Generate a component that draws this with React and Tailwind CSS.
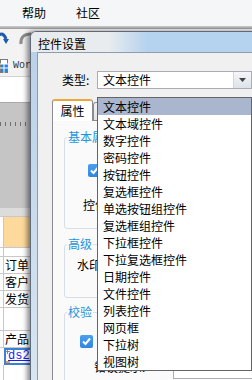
import React from 'react';

const controlTypes = [
  '文本控件',
  '文本域控件',
  '数字控件',
  '密码控件',
  '按钮控件',
  '复选框控件',
  '单选按钮组控件',
  '复选框组控件',
  '下拉框控件',
  '下拉复选框控件',
  '日期控件',
  '文件控件',
  '列表控件',
  '网页框',
  '下拉树',
  '视图树',
];

function CheckBox() {
  return (
    <div className="w-[13px] h-[13px] rounded-[2px] bg-gradient-to-b from-[#4a9ff0] to-[#2f86dc] flex items-center justify-center">
      <svg width="11" height="11" viewBox="0 0 11 11">
        <path d="M2 5.5 L4.5 8 L9 2.5" stroke="#ffffff" strokeWidth="2" fill="none" />
      </svg>
    </div>
  );
}

function GridRow({ h, children, cellClass = '' }) {
  return (
    <div className={`flex border-b border-[#c8c8c8] ${h}`}>
      <div className="w-[4px] bg-white border-r border-[#c8c8c8]" />
      <div className={`flex-1 pl-[1px] leading-[16px] ${cellClass}`}>{children}</div>
    </div>
  );
}

export default function App() {
  return (
    <div className="relative w-[252px] h-[380px] overflow-hidden bg-white font-['Noto_Sans_CJK_SC',sans-serif] text-[12px] text-black">
      {/* 设计器主窗口（背景） */}
      <div className="flex flex-col w-full h-full">
        <div className="h-[26px] flex items-center bg-[#f5f6f7] leading-none">
          <span className="ml-[22px]">帮助</span>
          <span className="ml-[30px]">社区</span>
        </div>
        <div className="h-[3px] bg-gradient-to-b from-[#d0d0d0] to-[#989898]" />
        <div className="h-[47px] bg-[#f3f3f3] flex flex-col">
          <div className="h-[24px] flex items-start pt-[3px]">
            <svg width="9" height="13" viewBox="0 0 9 13">
              <path d="M-2 4 Q3 -1 6 7" stroke="#1d5ca8" strokeWidth="3" fill="none" />
              <path d="M3 7 L9 7 L6 12 Z" fill="#1d5ca8" />
            </svg>
            <svg className="ml-[9px]" width="13" height="13" viewBox="0 0 13 13">
              <path d="M3 12 Q2 2 13 2" stroke="#8c8c8c" strokeWidth="3" fill="none" />
            </svg>
          </div>
          <div className="h-[23px] flex items-center pt-[2px]">
            <svg width="8" height="14" viewBox="0 0 8 14">
              <rect x="0.5" y="0.5" width="7" height="13" fill="#ffffff" stroke="#7a7a7a" />
              <rect x="1" y="5" width="6" height="8" fill="#2a84dc" />
              <path d="M0 5 H8 M0 9 H8 M4 5 V14" stroke="#ffffff" strokeWidth="1" />
            </svg>
            <span className="ml-[5px] font-['Liberation_Mono',monospace] text-[10px] text-[#333333]">Word</span>
          </div>
        </div>
        <div className="h-[26px] bg-white border-t border-[#d4d4d4]" />
        <div className="h-[106px] bg-[#c5c5c5] border-t border-[#a9a9a9] pt-[19px]">
          <div className="flex gap-[4px]">
            {[0, 1, 2, 3, 4, 5, 6].map((i) => (
              <div key={i} className="w-[1px] h-[4px] bg-[#6f6f6f]" />
            ))}
          </div>
        </div>
        <div className="h-[9px] bg-[#dcdcdc] border-b border-[#c8c8c8]" />
        <div className="flex-1 flex flex-col">
          <GridRow h="h-[31px]" cellClass="bg-[#fdd99b]" />
          <GridRow h="h-[9px]" />
          <GridRow h="h-[17px]">订单</GridRow>
          <GridRow h="h-[17px]">客户</GridRow>
          <GridRow h="h-[17px]">发货</GridRow>
          <GridRow h="h-[23px]" />
          <GridRow h="h-[17px]">产品</GridRow>
          <div className="flex h-[17px]">
            <div className="w-[4px] bg-white" />
            <div className="relative flex-1 border-2 border-[#3b7fd8] pl-[2px] leading-[13px] font-['Liberation_Mono',monospace] text-[12px] text-[#1a1aff] underline">
              ds2.
              <svg className="absolute left-0 top-0" width="4" height="4" viewBox="0 0 4 4">
                <path d="M0 1.5 H4 M1.5 0 V4" stroke="#888888" strokeWidth="1" />
              </svg>
              <span className="absolute left-0 bottom-0 w-[4px] h-[2px] bg-[#f0a020]" />
            </div>
          </div>
          <div className="flex flex-1">
            <div className="w-[4px] bg-white border-r border-[#c8c8c8]" />
          </div>
        </div>
      </div>

      {/* 控件设置 对话框 */}
      <div className="absolute left-[30px] top-[31px] w-[260px] h-[360px] rounded-tl-[6px] border-l border-t border-[#5f6b78] bg-gradient-to-b from-[#b8d0e8] to-[#d9e6f2] shadow-[-3px_0_5px_rgba(0,0,0,0.45)] flex flex-col">
        <div className="h-[28px] pl-[7px] pt-[4px] leading-[16px] rounded-tl-[5px] bg-linear-to-r from-[#e9ecef] from-30% to-[#b5d2ee] to-45%">
          控件设置
        </div>
        <div className="flex-1 ml-[6px] border-l border-t border-[#8d9cab] bg-[#f0f0f0] flex flex-col">
          <div className="mt-[18px] flex h-[18px]">
            <div className="w-[59px] pl-[24px] leading-[18px]">类型:</div>
            <div className="w-[155px] h-[18px] border border-[#abadb3] bg-white flex">
              <div className="flex-1 pl-[5px] leading-[16px]">文本控件</div>
              <div className="w-[18px] border-l border-[#d5d5d5] bg-gradient-to-b from-[#f4f6f8] to-[#dde3ea] flex items-center justify-center">
                <svg width="7" height="4" viewBox="0 0 7 4">
                  <path d="M0 0 H7 L3.5 4 Z" fill="#444444" />
                </svg>
              </div>
            </div>
          </div>

          <div className="mt-[10px] ml-[14px] flex items-end h-[21px]">
            <div className="relative z-10 -mb-[1px] w-[41px] h-[22px] border-x border-t-2 border-[#898c95] border-t-[#eda83a] rounded-t-[3px] bg-white flex items-center justify-center leading-[16px]">
              属性
            </div>
            <div className="w-[60px] h-[18px] border-x border-t border-[#898c95] rounded-t-[3px] bg-gradient-to-b from-[#f3f3f3] to-[#e3e3e3]" />
          </div>

          <div className="flex-1 ml-[14px] border-l border-t border-[#898c95] bg-[#fafafa] flex flex-col">
            <fieldset className="mt-[8px] ml-[11px] w-[200px] h-[100px] border border-[#d5dfe5] rounded-[3px]">
              <legend className="ml-[2px] px-[1px] leading-[16px] text-[#1d95dd]">基本属性</legend>
              <div className="mt-[19px] ml-[23px]">
                <CheckBox />
              </div>
              <div className="mt-[20px] ml-[18px] leading-[16px]">控件名称:</div>
            </fieldset>

            <fieldset className="mt-[7px] ml-[11px] w-[200px] h-[62px] border border-[#d5dfe5] rounded-[3px]">
              <legend className="ml-[2px] px-[1px] leading-[16px] text-[#1d95dd]">高级</legend>
              <div className="mt-[5px] ml-[12px] leading-[16px]">水印文字:</div>
            </fieldset>

            <fieldset className="mt-[6px] ml-[11px] w-[200px] h-[100px] border border-[#d5dfe5] rounded-[3px]">
              <legend className="ml-[2px] px-[1px] leading-[16px] text-[#1d95dd]">校验</legend>
              <div className="mt-[15px] ml-[15px]">
                <CheckBox />
              </div>
              <div className="mt-[11px] ml-[29px] flex items-start">
                <div className="w-[79px] leading-[16px]">错误提示:</div>
                <div className="w-[90px] h-[20px] border border-[#abadb3] bg-white" />
              </div>
            </fieldset>
          </div>
        </div>
      </div>

      {/* 下拉列表 */}
      <div className="absolute left-[97px] top-[97px] w-[155px] border border-[#646464] bg-white">
        {controlTypes.map((name, i) => (
          <div
            key={name}
            className={`h-[17px] leading-[17px] pl-[5px] whitespace-nowrap ${i === 0 ? 'bg-[#a9b6ce]' : ''}`}
          >
            {name}
          </div>
        ))}
      </div>
    </div>
  );
}
